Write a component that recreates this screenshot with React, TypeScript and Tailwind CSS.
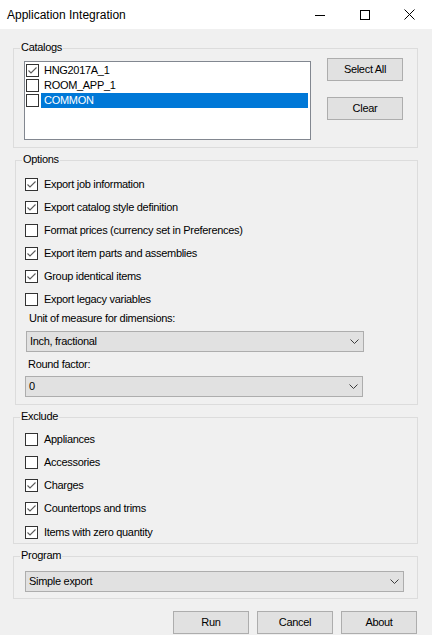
import React from "react";

const Check = ({ checked }: { checked: boolean }) => (
  <div className="w-[13px] h-[13px] shrink-0 border border-[#333333] bg-white flex items-center justify-center">
    {checked && (
      <svg width="11" height="11" viewBox="0 0 11 11">
        <path d="M1.5 5.5 L4 8 L9.5 2.5" fill="none" stroke="#5a5a5a" strokeWidth="1.1" />
      </svg>
    )}
  </div>
);

const Row = ({ checked, label }: { checked: boolean; label: string }) => (
  <div className="h-[23px] flex items-center gap-[6px]">
    <Check checked={checked} />
    <span className="leading-[13px] whitespace-nowrap">{label}</span>
  </div>
);

const Chevron = () => (
  <svg width="9" height="5" viewBox="0 0 9 5" className="shrink-0">
    <path d="M0.5 0.5 L4.5 4.5 L8.5 0.5" fill="none" stroke="#3c3c3c" strokeWidth="1" />
  </svg>
);

const Combo = ({ value, w, cls }: { value: string; w: string; cls: string }) => (
  <div className={`${w} ${cls} h-[21px] bg-[#e1e1e1] border border-[#adadad] flex items-center pl-[3px] pr-[4px]`}>
    <span className="flex-1 leading-[13px] whitespace-nowrap">{value}</span>
    <Chevron />
  </div>
);

const Btn = ({ label, cls = "" }: { label: string; cls?: string }) => (
  <div className={`w-[76px] h-[23px] bg-[#e1e1e1] border border-[#adadad] flex items-center justify-center leading-[13px] ${cls}`}>
    {label}
  </div>
);

const GroupLabel = ({ text }: { text: string }) => (
  <span className="absolute -top-[8px] left-[6px] px-[1px] bg-[#f0f0f0] leading-[13px] whitespace-nowrap">
    {text}
  </span>
);

export default function App() {
  return (
    <div className="w-[432px] h-[635px] overflow-hidden bg-[#f0f0f0] text-black text-[11px] tracking-[-0.3px] font-['Liberation_Sans',Arial,sans-serif] flex flex-col">
      {/* Title bar */}
      <div className="h-[29px] bg-white flex items-center shrink-0">
        <span className="pl-[7px] text-[12px] tracking-normal leading-[14px]">Application Integration</span>
        <div className="ml-auto flex h-full">
          <div className="w-[45px] h-full flex items-center justify-center">
            <svg width="10" height="10" viewBox="0 0 10 10">
              <path d="M0 5.5 H10" stroke="#000" strokeWidth="1" />
            </svg>
          </div>
          <div className="w-[45px] h-full flex items-center justify-center">
            <svg width="10" height="10" viewBox="0 0 10 10">
              <rect x="0.5" y="0.5" width="9" height="9" fill="none" stroke="#000" strokeWidth="1" />
            </svg>
          </div>
          <div className="w-[45px] h-full flex items-center justify-center">
            <svg width="11" height="11" viewBox="0 0 11 11">
              <path d="M0.5 0.5 L10.5 10.5 M10.5 0.5 L0.5 10.5" stroke="#000" strokeWidth="1" />
            </svg>
          </div>
        </div>
      </div>

      {/* Catalogs */}
      <div className="relative mt-[19px] ml-[13px] w-[405px] h-[100px] border border-[#dcdcdc] shrink-0">
        <GroupLabel text="Catalogs" />
        <div className="flex items-start pl-[10px]">
          <div className="mt-[12px] w-[287px] h-[79px] bg-white border border-[#828790] pt-[1px] pl-[1px] pr-[1px]">
            {[
              { n: "HNG2017A_1", c: true, s: false },
              { n: "ROOM_APP_1", c: false, s: false },
              { n: "COMMON", c: false, s: true },
            ].map((it) => (
              <div key={it.n} className="h-[15px] flex items-center">
                <Check checked={it.c} />
                <div
                  className={`ml-[2px] mr-[1px] flex-1 h-[15px] flex items-center pl-[3px] ${
                    it.s ? "bg-[#0078d7] text-white" : ""
                  }`}
                >
                  <span className="leading-[13px]">{it.n}</span>
                </div>
              </div>
            ))}
          </div>
          <div className="mt-[9px] ml-[16px] flex flex-col gap-[16px]">
            <Btn label="Select All" />
            <Btn label="Clear" />
          </div>
        </div>
      </div>

      {/* Options */}
      <div className="relative mt-[12px] ml-[15px] w-[403px] h-[245px] border border-[#dcdcdc] shrink-0">
        <GroupLabel text="Options" />
        <div className="pt-[12px] pl-[9px] flex flex-col">
          <Row checked label="Export job information" />
          <Row checked label="Export catalog style definition" />
          <Row checked={false} label="Format prices (currency set in Preferences)" />
          <Row checked label="Export item parts and assemblies" />
          <Row checked label="Group identical items" />
          <Row checked={false} label="Export legacy variables" />
        </div>
        <div className="flex flex-col">
          <div className="h-[14px] leading-[14px] pl-[13px]">Unit of measure for dimensions:</div>
          <Combo value="Inch, fractional" w="w-[338px]" cls="mt-[6px] ml-[10px]" />
          <div className="mt-[5px] h-[14px] leading-[14px] pl-[12px]">Round factor:</div>
          <Combo value="0" w="w-[338px]" cls="mt-[5px] ml-[9px]" />
        </div>
      </div>

      {/* Exclude */}
      <div className="relative mt-[12px] ml-[13px] w-[405px] h-[127px] border border-[#dcdcdc] shrink-0">
        <GroupLabel text="Exclude" />
        <div className="pt-[10px] pl-[11px] flex flex-col">
          <Row checked={false} label="Appliances" />
          <Row checked={false} label="Accessories" />
          <Row checked label="Charges" />
          <Row checked label="Countertops and trims" />
          <div className="mt-[1px]">
            <Row checked label="Items with zero quantity" />
          </div>
        </div>
      </div>

      {/* Program */}
      <div className="relative mt-[12px] ml-[13px] w-[405px] h-[43px] border border-[#dcdcdc] shrink-0">
        <GroupLabel text="Program" />
        <div className="pt-[14px] pl-[11px]">
          <Combo value="Simple export" w="w-[379px]" cls="" />
        </div>
      </div>

      {/* Buttons */}
      <div className="mt-[12px] flex justify-end gap-[8px] pr-[15px] shrink-0">
        <Btn label="Run" />
        <Btn label="Cancel" />
        <Btn label="About" />
      </div>
    </div>
  );
}
